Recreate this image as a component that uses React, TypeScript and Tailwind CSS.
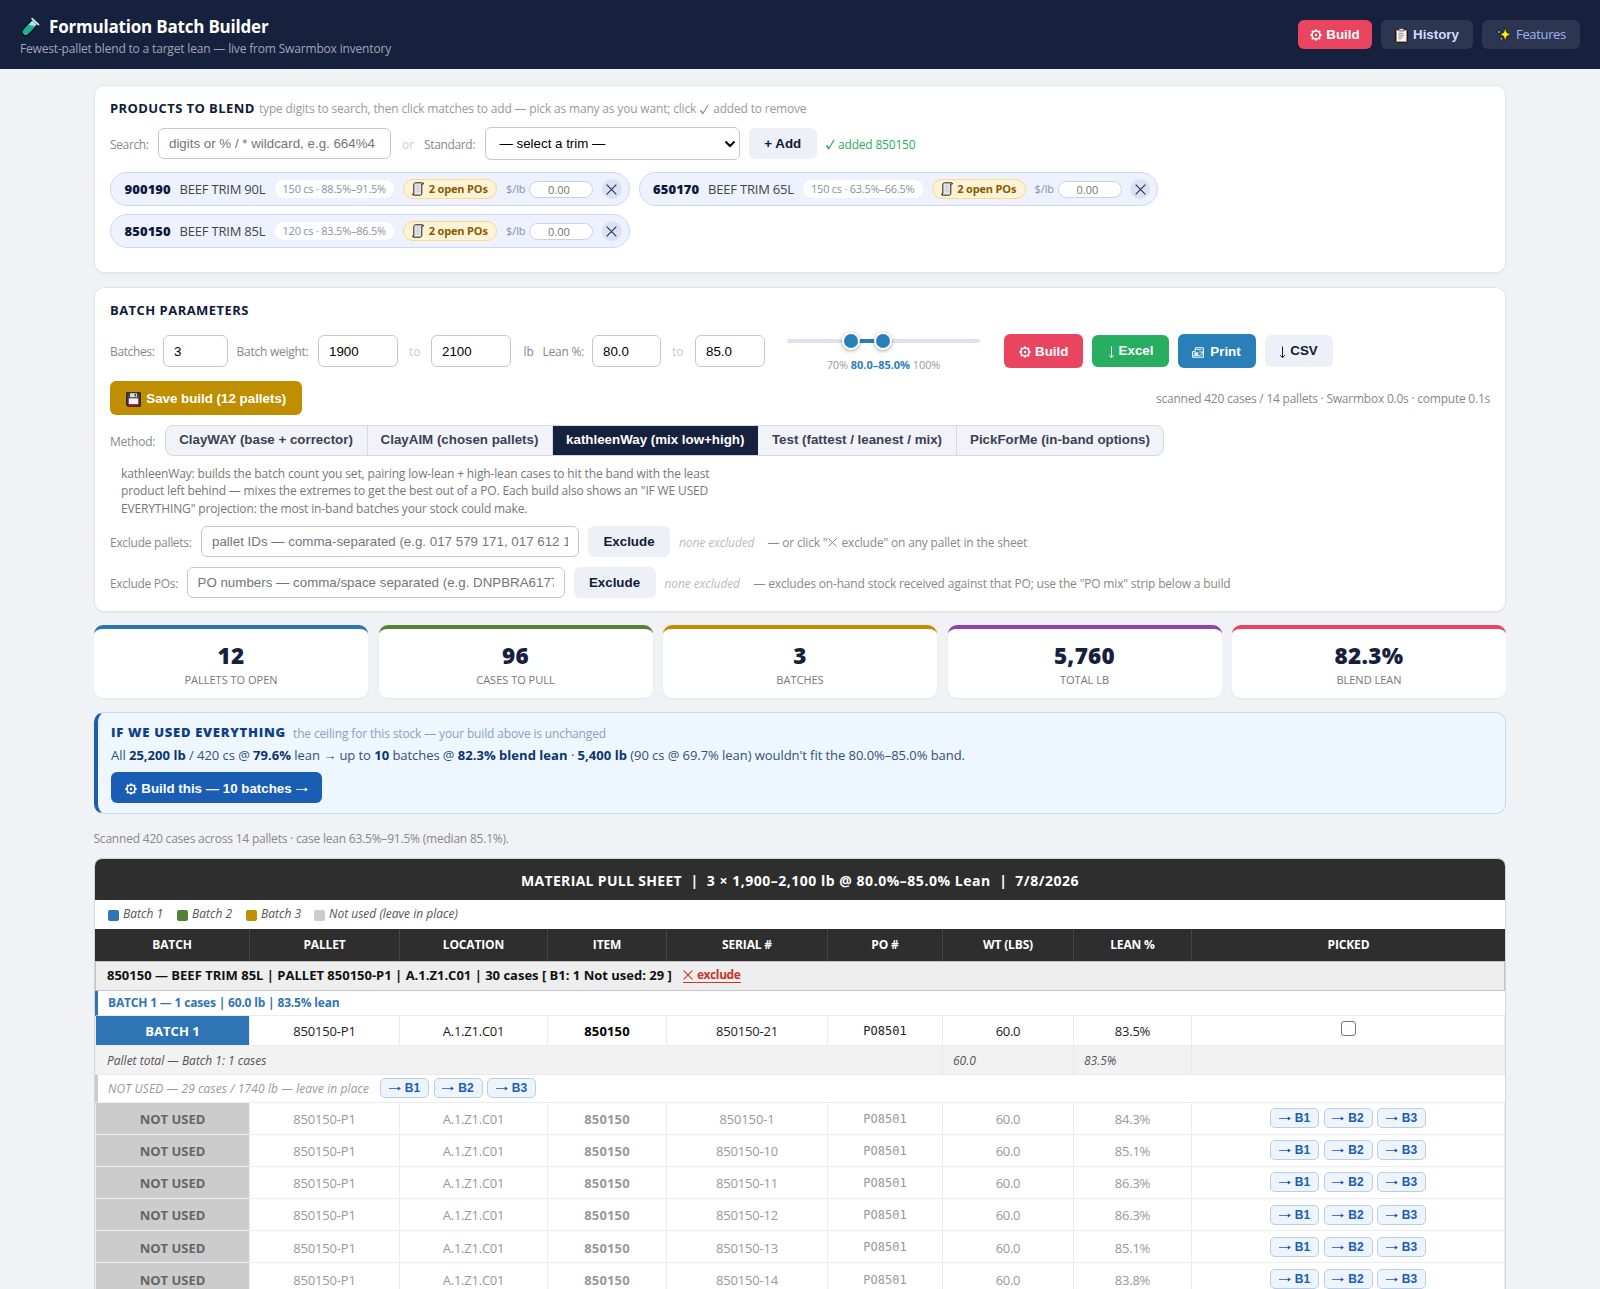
import React from 'react';
import clsx from 'clsx';

const PRODUCTS = [
  { code: '900190', name: 'BEEF TRIM 90L', stock: '150 cs · 88.5%–91.5%' },
  { code: '650170', name: 'BEEF TRIM 65L', stock: '150 cs · 63.5%–66.5%' },
  { code: '850150', name: 'BEEF TRIM 85L', stock: '120 cs · 83.5%–86.5%' },
];

const METHODS = [
  { label: 'ClayWAY (base + corrector)', width: 'w-[201px]' },
  { label: 'ClayAIM (chosen pallets)', width: 'w-[185px]' },
  { label: 'kathleenWay (mix low+high)', width: 'w-[206.5px]', active: true },
  { label: 'Test (fattest / leanest / mix)', width: 'w-[198px]' },
  { label: 'PickForMe (in-band options)', width: 'w-[207px]' },
];

const STATS = [
  { value: '12', label: 'PALLETS TO OPEN', color: 'border-t-[#2e75b6]' },
  { value: '96', label: 'CASES TO PULL', color: 'border-t-[#548235]' },
  { value: '3', label: 'BATCHES', color: 'border-t-[#bf8f00]' },
  { value: '5,760', label: 'TOTAL LB', color: 'border-t-[#8e44ad]' },
  { value: '82.3%', label: 'BLEND LEAN', color: 'border-t-[#e94560]' },
];

const COLUMNS = [
  { label: 'BATCH', width: 'w-[155px]' },
  { label: 'PALLET', width: 'w-[150px]' },
  { label: 'LOCATION', width: 'w-[148px]' },
  { label: 'ITEM', width: 'w-[119px]' },
  { label: 'SERIAL #', width: 'w-[161px]' },
  { label: 'PO #', width: 'w-[115px]' },
  { label: 'WT (LBS)', width: 'w-[131px]' },
  { label: 'LEAN %', width: 'w-[118px]' },
  { label: 'PICKED', width: 'w-[313px]' },
];

const UNUSED = [
  { serial: '850150-1', lean: '84.3%' },
  { serial: '850150-10', lean: '85.1%' },
  { serial: '850150-11', lean: '86.3%' },
  { serial: '850150-12', lean: '86.3%' },
  { serial: '850150-13', lean: '85.1%' },
  { serial: '850150-14', lean: '83.8%' },
];

type IconProps = { className?: string };

const GearIcon = ({ className }: IconProps) => (
  <svg className={className} width="12" height="12" viewBox="0 0 12 12" fill="none" stroke="currentColor">
    <circle cx="6" cy="6" r="4" strokeWidth="1.6" />
    <circle cx="6" cy="6" r="1.2" fill="currentColor" stroke="none" />
    <path
      d="M6 .4v1.600M6 10v1.600M.4 6h1.600M10 6h1.600M2 2l1 1M9 9l1 1M10 2L9 3M3 9l-1 1"
      strokeWidth="2"
    />
  </svg>
);

const DownArrow = ({ className }: IconProps) => (
  <svg className={className} width="7" height="13" viewBox="0 0 7 13" fill="none" stroke="currentColor">
    <path d="M3.5 .5v11M1.2 9.2l2.3 2.6 2.3-2.6" strokeWidth="1" />
  </svg>
);

const RightArrow = ({ className }: IconProps) => (
  <svg className={className} width="12" height="7" viewBox="0 0 12 7" fill="none">
    <path d="M0 3.5h10.500" stroke="currentColor" strokeWidth=".8" />
    <path d="M8.800 1.600L12 3.500 8.800 5.400z" fill="currentColor" />
  </svg>
);

const CrossIcon = ({ className }: IconProps) => (
  <svg className={className} viewBox="0 0 10 10" fill="none" stroke="currentColor">
    <path d="M.6 .6l8.8 8.8M9.4 .6L.6 9.4" strokeWidth="1.1" />
  </svg>
);

const CheckIcon = ({ className }: IconProps) => (
  <svg className={className} width="9" height="11" viewBox="0 0 9 11" fill="none" stroke="currentColor">
    <path d="M.6 6.6l2.2 3.2L8.2 .6" strokeWidth="1.1" />
    <path d="M.8 6.4l2 3.2" strokeWidth="1.6" />
  </svg>
);

const TubeIcon = () => (
  <svg width="21" height="20" viewBox="0 0 20 20">
    <path
      d="M11.800 2.200l5.600 5.200-9.400 10a3.700 3.700 0 0 1-5.300-5.200z"
      fill="#b9dcf3"
      stroke="#0c0f18"
      strokeWidth="1.600"
    />
    <path d="M7.600 7.600l7.200 1.800-7.300 7.500a3 3 0 0 1-4.300-4.200z" fill="#16b394" />
    <path d="M11.600 1.600l6.400 6" stroke="#cfe8f8" strokeWidth="1.800" strokeLinecap="round" />
  </svg>
);

const ClipboardIcon = () => (
  <svg width="13" height="15" viewBox="0 0 13 15">
    <rect x=".6" y="1.2" width="11.8" height="13.2" rx="1" fill="#c9916a" stroke="#111" strokeWidth="1" />
    <rect x="2" y="2.8" width="9" height="10.4" fill="#f3f3f3" />
    <rect x="4" y=".4" width="5" height="2.6" rx=".6" fill="#ddd" stroke="#222" strokeWidth=".6" />
    <path d="M3.4 5.4h5M3.4 7.2h6M3.4 9h4.4M3.4 10.8h3" stroke="#8d8d8d" strokeWidth=".9" />
  </svg>
);

const SparklesIcon = () => (
  <svg width="15" height="15" viewBox="0 0 15 15" stroke="#111" strokeWidth=".7">
    <path d="M9.2 .9l1.6 4.700 4 1.800-4 1.800-1.600 4.900-1.600-4.900L4 7.400l3.600-1.800z" fill="#fff100" />
    <path d="M3 2.2l.8 2 1.8.8-1.8.8-.8 2-.8-2L.4 5l1.8-.8z" fill="#50c8f4" />
    <path d="M5.4 9.4l.7 1.6 1.5.7-1.5.7-.7 1.6-.7-1.6-1.5-.7 1.5-.7z" fill="#f48fb1" />
  </svg>
);

const ReceiptIcon = () => (
  <svg width="12" height="14" viewBox="0 0 12 14">
    <path
      d="M3.4 .8h7.2c.6 0 .9.5.9 1.2H9.8v9c0 1.4-.6 2.2-1.7 2.2H1.4C.8 13.2.5 12.7.5 12h1.3V2.8c0-1.3.5-2 1.6-2z"
      fill="#e6e6ea"
      stroke="#222"
      strokeWidth="1"
    />
    <path d="M3.6 3.5h4.6M3.6 5.5h4.6M3.6 7.5h4.6M3.6 9.5h4.6M5.9 2.5v8.5" stroke="#c6c6cc" strokeWidth=".6" />
  </svg>
);

const FloppyIcon = () => (
  <svg width="15" height="15" viewBox="0 0 15 15">
    <path d="M.8 .8h13.4v13.4H2.3L.8 12.7z" fill="#4a4650" stroke="#1b1b1b" strokeWidth="1.2" />
    <rect x="4" y="1.2" width="7" height="4" fill="#d9d9de" />
    <rect x="8.6" y="1.8" width="1.5" height="2.6" fill="#4a4650" />
    <rect x="2.8" y="6.4" width="9.4" height="5.8" fill="#f4f4f6" />
    <rect x="2.8" y="12" width="9.4" height="1.7" fill="#d0104c" />
  </svg>
);

const PrinterIcon = () => (
  <svg width="12" height="11" viewBox="0 0 12 11" fill="none" stroke="currentColor">
    <path d="M.6 10.300V4.800L2.800 4M.6 10.300h10.700V1" strokeWidth="1.100" />
    <path d="M2.800 4.800L3.800 .7h7.500" strokeWidth="1.100" />
    <path d="M4.600 2.600h4.800" strokeWidth=".9" />
    <path d="M2.400 5.400h3.800v2.400H2.400z" fill="currentColor" stroke="none" />
    <path d="M7 5h4L8.400 8.600H1" strokeWidth=".9" />
  </svg>
);

const arial = "font-['Liberation_Sans',Arial,sans-serif]";

const Card = ({ children, className }: { children: React.ReactNode; className?: string }) => (
  <section
    className={clsx(
      'rounded-[10px] border border-[#e2e4e6] bg-white px-[15px] shadow-[0_1px_2px_rgba(0,0,0,0.04)]',
      className
    )}
  >
    {children}
  </section>
);

const Label = ({ children, className }: { children: React.ReactNode; className?: string }) => (
  <label className={clsx('shrink-0 whitespace-nowrap pt-0.5 text-xs text-[#888]', className)}>{children}</label>
);

const Field = ({ className, ...props }: React.InputHTMLAttributes<HTMLInputElement>) => (
  <input
    className={clsx(
      'h-8 shrink-0 rounded-md border border-[#c8c8c8] bg-white px-[10px] text-[13.333px] text-black placeholder:text-[#757575]',
      arial,
      className
    )}
    {...props}
  />
);

const Button = ({ children, className }: { children: React.ReactNode; className?: string }) => (
  <button
    className={clsx(
      'flex shrink-0 items-center justify-center whitespace-nowrap rounded-md text-[13.333px] font-bold',
      arial,
      className
    )}
  >
    {children}
  </button>
);

const ProductChip = ({ code, name, stock }: (typeof PRODUCTS)[number]) => (
  <div className="flex h-[34px] w-[519.5px] shrink-0 items-center rounded-full border border-[#cdd8f6] bg-[#eef2ff] pl-[13.5px] pr-[7px]">
    <span className="w-[55px] pt-px text-[13px] font-extrabold tracking-[0.1px] text-[#0f1a3a]">{code}</span>
    <span className="w-[95px] whitespace-nowrap pt-px text-[13px] tracking-[-0.2px] text-[#444]">{name}</span>
    <span className="flex h-[18px] w-[119.5px] items-center justify-center whitespace-nowrap rounded-full bg-white pt-px text-[11px] tracking-[-0.23px] text-[#8a90a8]">
      {stock}
    </span>
    <span className="ml-[9px] flex h-5 w-[94px] items-center justify-center gap-[4.500px] whitespace-nowrap rounded-full border border-[#fbd88a] bg-[#fff3d6] text-[11px] font-bold tracking-[-0.16px] text-[#8a5a00]">
      <ReceiptIcon />
      <span className="pt-px">2 open POs</span>
    </span>
    <span className="ml-[9px] w-[23px] pt-px text-[11px] tracking-[-0.09px] text-[#8a90a8]">$/lb</span>
    <input
      placeholder="0.00"
      className="h-[17px] w-[64px] rounded-full border border-[#c8d0ea] bg-white pl-[18px] text-[11px] placeholder:text-[#757575]"
    />
    <span className="ml-auto flex size-5 items-center justify-center rounded-full bg-[#dbe1f3] text-[#2b3563]">
      <CrossIcon className="size-[11px]" />
    </span>
  </div>
);

const MoveButtons = () => (
  <div className="flex gap-[4.500px]">
    {['B1', 'B2', 'B3'].map((b) => (
      <button
        key={b}
        className={clsx(
          'flex h-5 w-[49px] items-center justify-center gap-1 rounded-[5px] border border-[#b8cde8] bg-[#eef4fc] text-xs font-bold text-[#1a5db5]',
          arial
        )}
      >
        <RightArrow className="mt-px" />
        {b}
      </button>
    ))}
  </div>
);

const LeanSlider = () => (
  <div className="ml-[22.5px] mt-[9px] flex w-[193px] flex-col items-center">
    <div className="relative h-1 w-full rounded-full bg-[#dde2ee]">
      <div className="absolute left-[64px] h-1 w-[33px] bg-[#2980b9]" />
      <div className="absolute -top-[7px] left-[55px] size-[18px] rounded-full border-2 border-white bg-[#2980b9] shadow-[0_1px_4px_rgba(0,0,0,0.35)]" />
      <div className="absolute -top-[7px] left-[87px] size-[18px] rounded-full border-2 border-white bg-[#2980b9] shadow-[0_1px_4px_rgba(0,0,0,0.35)]" />
    </div>
    <div className="mt-[14px] h-4 whitespace-nowrap text-[11px] leading-4 tracking-[-0.1px] text-[#999]">
      70% <b className="tracking-[-0.02px] text-[#2980b9]">80.0–85.0%</b> 100%
    </div>
  </div>
);

const Header = () => (
  <header className="flex h-[69px] items-center justify-between bg-[#16213e] px-5">
    <div className="pt-[3px]">
      <h1 className="flex h-[23px] items-center gap-[8px] text-[17px] font-bold tracking-[-0.2px] text-white">
        <TubeIcon />
        Formulation Batch Builder
      </h1>
      <p className="h-[18px] pt-px text-xs leading-[18px] tracking-[-0.173px] text-[#a0a6b6]">
        Fewest-pallet blend to a target lean — live from Swarmbox inventory
      </p>
    </div>
    <nav className="flex gap-[9px]">
      <Button className="h-[29px] w-[74.5px] gap-[4.5px] bg-[#e94560] pt-px text-white">
        <GearIcon />
        Build
      </Button>
      <Button className="h-[29px] w-[92px] gap-[5px] bg-[#2d3650] pt-px text-[#cfdcff]">
        <ClipboardIcon />
        History
      </Button>
      <a className="flex h-[29px] w-[98px] items-center justify-center gap-[5px] rounded-md bg-[#2d3650] text-[13px] tracking-[-0.35px] text-[#9fb4f5]">
        <SparklesIcon />
        <span className="pt-px">Features</span>
      </a>
    </nav>
  </header>
);

const ProductsCard = () => (
  <Card className="h-[188px] pt-[13px]">
    <div className="flex h-[19px] items-center whitespace-nowrap">
      <h2 className="w-[149px] text-[13px] font-bold tracking-[0.41px] text-[#0f1a3a]">PRODUCTS TO BLEND</h2>
      <span className="flex items-center gap-1 pt-px text-xs tracking-[-0.175px] text-[#999]">
        type digits to search, then click matches to add — pick as many as you want; click
        <CheckIcon /> added to remove
      </span>
    </div>
    <div className="mt-[9px] flex h-[33px] items-center">
      <Label className="w-[48px] tracking-[-0.365px]">Search:</Label>
      <Field placeholder="digits or % / * wildcard, e.g. 664%4" className="h-[31px] w-[233px]" />
      <Label className="ml-[11px] w-[22px] text-[#ccc]">or</Label>
      <Label className="w-[60.5px] tracking-[-0.35px]">Standard:</Label>
      <div
        className={clsx(
          'flex h-[33px] w-[255.5px] items-center justify-between rounded-md border border-[#c8c8c8] bg-white pl-[14px] pr-[3px] text-[13.333px] text-black',
          arial
        )}
      >
        — select a trim —
        <svg width="12" height="8" viewBox="0 0 12 8" fill="none" stroke="currentColor">
          <path d="M1.5 1.5L6 6l4.500-4.500" strokeWidth="2" />
        </svg>
      </div>
      <Button className="ml-[9px] h-[31px] w-[67.5px] bg-[#edf0f6] text-[#0f1a3a]">+ Add</Button>
      <span className="ml-[9.5px] flex items-center gap-[3px] whitespace-nowrap pt-0.5 text-xs tracking-[-0.19px] text-[#27ae60]">
        <CheckIcon />
        added 850150
      </span>
    </div>
    <div className="mt-3 flex w-[1100px] flex-wrap gap-x-[9px] gap-y-2">
      {PRODUCTS.map((p) => (
        <ProductChip key={p.code} {...p} />
      ))}
    </div>
  </Card>
);

const ParametersCard = () => (
  <Card className="h-[325px] pt-[13px]">
    <h2 className="h-[18px] text-[13px] font-bold leading-[18px] tracking-[0.46px] text-[#0f1a3a]">BATCH PARAMETERS</h2>

    <div className="mt-[13px] flex h-[38px] items-center">
      <Label className="w-[53px] tracking-[-0.365px]">Batches:</Label>
      <Field defaultValue="3" className="w-[65px]" />
      <Label className="ml-[8.5px] w-[81.5px] tracking-[-0.254px]">Batch weight:</Label>
      <Field defaultValue="1900" className="w-[80px]" />
      <Label className="ml-[11px] w-[22px] text-[#ccc]">to</Label>
      <Field defaultValue="2100" className="w-[80px]" />
      <Label className="ml-[12.5px] w-[19px]">lb</Label>
      <Label className="w-[49.5px] tracking-[-0.246px]">Lean %:</Label>
      <Field defaultValue="80.0" className="w-[69px]" />
      <Label className="ml-[11px] w-[23px] text-[#ccc]">to</Label>
      <Field defaultValue="85.0" className="w-[69.5px]" />
      <LeanSlider />
      <Button className="ml-[24px] h-[34px] w-[79px] gap-[4.5px] bg-[#e94560] pt-0.5 text-white">
        <GearIcon />
        Build
      </Button>
      <Button className="ml-[9px] h-8 w-[77px] gap-1 bg-[#27ae60] text-white">
        <DownArrow className="mt-0.5" />
        Excel
      </Button>
      <Button className="ml-[8.5px] h-[34px] w-[78px] gap-[6px] bg-[#2980b9] pt-0.5 text-white">
        <PrinterIcon />
        Print
      </Button>
      <Button className="ml-[9px] h-8 w-[68px] gap-1 bg-[#edf0f6] text-[#0f1a3a]">
        <DownArrow className="mt-0.5" />
        CSV
      </Button>
    </div>

    <div className="mt-[11px] flex h-[34px] items-center justify-between">
      <Button className="h-[34px] w-[192px] gap-[5.500px] bg-[#bf8f00] pt-0.5 text-white">
        <FloppyIcon />
        Save build (12 pallets)
      </Button>
      <span className="pt-0.5 text-xs tracking-[-0.23px] text-[#888]">
        scanned 420 cases / 14 pallets · Swarmbox 0.0s · compute 0.1s
      </span>
    </div>

    <div className="mt-[9px] flex h-8 items-center">
      <Label className="w-[54.5px] pt-[3px] tracking-[-0.23px]">Method:</Label>
      <div className="flex h-[31px] overflow-hidden rounded-lg border border-[#d5d8e6] bg-[#f2f3f8]">
        {METHODS.map((m, i) => (
          <button
            key={m.label}
            className={clsx(
              'whitespace-nowrap text-[13.333px] font-bold',
              arial,
              m.width,
              i > 0 && !METHODS[i - 1].active && 'border-l border-[#d5d8e6]',
              m.active ? 'border-[#16213e] bg-[#16213e] text-white' : 'text-[#3a3f55]'
            )}
          >
            {m.label}
          </button>
        ))}
      </div>
    </div>

    <p className="ml-[11px] mt-[9px] h-[52px] text-xs leading-[17.4px] tracking-[-0.15px] text-[#777]">
      kathleenWay: builds the batch count you set, pairing low-lean + high-lean cases to hit the band with the least
      <br />
      product left behind — mixes the extremes to get the best out of a PO. Each build also shows an "IF WE USED
      <br />
      EVERYTHING" projection: the most in-band batches your stock could make.
    </p>

    <div className="mt-[8px] flex h-[32px] items-center">
      <Label className="w-[91px] pt-[3px] tracking-[-0.29px]">Exclude pallets:</Label>
      <Field
        placeholder="pallet IDs — comma-separated (e.g. 017 579 171, 017 612 123)"
        className="h-[31px] w-[378px]"
      />
      <Button className="ml-[9px] h-[31px] w-[82px] bg-[#edf0f6] pt-px text-[#0f1a3a]">Exclude</Button>
      <i className="ml-[9px] w-[88.5px] whitespace-nowrap pt-[3px] text-xs tracking-[-0.09px] text-[#bbb]">
        none excluded
      </i>
      <span className="flex items-center whitespace-nowrap pt-[3px] text-xs tracking-[-0.18px] text-[#888]">
        — or click "<CrossIcon className="mx-px size-[9px]" />
        <span className="ml-[3px]">exclude" on any pallet in the sheet</span>
      </span>
    </div>
    <div className="mt-[9px] flex h-[32px] items-center">
      <Label className="w-[76.5px] pt-[3px] tracking-[-0.31px]">Exclude POs:</Label>
      <Field
        placeholder="PO numbers — comma/space separated (e.g. DNPBRA61772)"
        className="h-[31px] w-[378px]"
      />
      <Button className="ml-[9px] h-[31px] w-[82px] bg-[#edf0f6] pt-px text-[#0f1a3a]">Exclude</Button>
      <i className="ml-[9px] w-[89px] whitespace-nowrap pt-[3px] text-xs tracking-[-0.09px] text-[#bbb]">
        none excluded
      </i>
      <span className="whitespace-nowrap pt-[3px] text-xs tracking-[-0.176px] text-[#888]">
        — excludes on-hand stock received against that PO; use the "PO mix" strip below a build
      </span>
    </div>
  </Card>
);

const Stats = () => (
  <div className="grid h-[73px] grid-cols-5 gap-[10.5px]">
    {STATS.map((s) => (
      <div
        key={s.label}
        className={clsx(
          'flex flex-col items-center rounded-[9px] border-t-4 bg-white pt-[11px] shadow-[0_1px_2px_rgba(0,0,0,0.05)]',
          s.color
        )}
      >
        <div className="h-8 text-[22.5px] font-extrabold leading-8 tracking-[0.3px] text-[#16213e]">{s.value}</div>
        <div className="h-4 text-[11px] leading-4 text-[#777]">{s.label}</div>
      </div>
    ))}
  </div>
);

const CeilingBanner = () => (
  <section className="h-[102px] rounded-[10px] border border-l-4 border-[#bfdaf7] border-l-[#1a5db5] bg-[#eef6ff] pl-[13px] pt-[10px]">
    <div className="flex h-[20px] items-center">
      <h2 className="w-[182px] whitespace-nowrap text-[13px] font-extrabold tracking-[0.72px] text-[#0d3f86]">
        IF WE USED EVERYTHING
      </h2>
      <span className="pt-px text-xs tracking-[-0.148px] text-[#8a9fc0]">
        the ceiling for this stock — your build above is unchanged
      </span>
    </div>
    <p className="mt-[2px] h-[20px] text-[13px] leading-5 tracking-[-0.06px] text-[#33507a] [&_b]:tracking-[0.04px] [&_b]:text-[#0b3470]">
      All <b>25,200 lb</b> / 420 cs @ <b>79.6%</b> lean → up to <b>10</b> batches @ <b>82.3% blend lean</b> ·{' '}
      <b>5,400 lb</b> (90 cs @ 69.7% lean) wouldn't fit the 80.0%–85.0% band.
    </p>
    <Button className="mt-[7px] h-[31px] w-[211px] gap-[4px] bg-[#1a5db5] pt-0.5 text-white">
      <GearIcon />
      Build this — 10 batches
      <RightArrow className="mt-px" />
    </Button>
  </section>
);

const LEGEND = [
  { label: 'Batch 1', color: 'bg-[#2e75b6]', width: 'w-[69px]' },
  { label: 'Batch 2', color: 'bg-[#548235]', width: 'w-[69px]' },
  { label: 'Batch 3', color: 'bg-[#bf8f00]', width: 'w-[68px]' },
  { label: 'Not used (leave in place)', color: 'bg-[#ccc]', width: 'w-[150px]' },
];

const cell = 'border-b border-r border-[#ececee] text-center align-middle p-0';
const textCell = clsx(cell, 'pt-[3px]');

const CaseRow = ({ serial, lean, used }: { serial: string; lean: string; used?: boolean }) => (
  <tr className={clsx(used ? 'h-[30px] text-[#222]' : 'h-[32.2px] text-[#999]')}>
    <td
      className={clsx(
        textCell,
        'border-l border-[#e4e4e6] text-[13px] font-bold',
        used ? 'bg-[#2e75b6] text-white' : 'bg-[#ccc] text-[#666]'
      )}
    >
      {used ? 'BATCH 1' : 'NOT USED'}
    </td>
    <td className={clsx(textCell, 'tracking-[-0.172px]')}>850150-P1</td>
    <td className={clsx(textCell, 'tracking-[-0.233px]')}>A.1.Z1.C01</td>
    <td className={clsx(textCell, 'font-bold tracking-[0.18px]', used && 'text-black')}>850150</td>
    <td className={clsx(textCell, 'tracking-[-0.17px]')}>{serial}</td>
    <td className={clsx(cell, "pt-px font-['DejaVu_Sans_Mono',monospace] text-xs")}>PO8501</td>
    <td className={clsx(textCell, 'tracking-[-0.3px]')}>60.0</td>
    <td className={clsx(textCell, 'tracking-[-0.234px]')}>{lean}</td>
    <td className={cell}>
      <div className="flex justify-center">
        {used ? <span className="mb-1 size-[15px] rounded-[3px] border border-[#767676] bg-white" /> : <MoveButtons />}
      </div>
    </td>
  </tr>
);

const PullSheet = () => (
  <section className="h-[431px] overflow-hidden rounded-t-[8px] border border-b-0 border-[#d4d5d8] bg-white">
    <h2 className="flex h-[41px] items-center justify-center gap-[8.5px] whitespace-pre bg-[#2e2e2e] pt-0.5 text-sm font-bold text-white">
      <span className="tracking-[0.32px]">MATERIAL PULL SHEET</span>
      <span>|</span>
      <span className="tracking-[0.52px]">3 × 1,900–2,100 lb @ 80.0%–85.0% Lean</span>
      <span>|</span>
      <span className="tracking-[0.5px]">7/8/2026</span>
    </h2>
    <div className="flex h-[28.5px] items-center pl-[13px] text-xs italic text-[#555]">
      {LEGEND.map((l) => (
        <span key={l.label} className={clsx('flex items-center gap-1 whitespace-nowrap', l.width)}>
          <span className={clsx('mt-0.5 size-[11px] rounded-[2px]', l.color)} />
          {l.label}
        </span>
      ))}
    </div>
    <table className="w-full table-fixed border-separate border-spacing-0 text-[13px]">
      <colgroup>
        {COLUMNS.map((c) => (
          <col key={c.label} className={c.width} />
        ))}
      </colgroup>
      <thead>
        <tr className="h-[32px] bg-[#2e2e2e] text-xs text-white">
          {COLUMNS.map((c) => (
            <th
              key={c.label}
              className="border-r border-[#444] p-0 pt-px font-bold tracking-[-0.15px] last:border-r-0"
            >
              {c.label}
            </th>
          ))}
        </tr>
      </thead>
      <tbody>
        <tr className="h-[30px] bg-[#eee]">
          <td
            colSpan={9}
            className="whitespace-pre border-x border-y border-[#c4c4c6] p-0 pl-[11px] pt-px text-[13px] font-bold text-[#111]"
          >
            850150 — BEEF TRIM 85L | PALLET 850150-P1 | A.1.Z1.C01 | 30 cases [ B1: 1 Not used: 29 ]
            <a className="ml-[11px] inline-flex items-center gap-1 border-b border-[#c0392b] text-xs leading-[14px] tracking-[-0.4px] text-[#c0392b]">
              <CrossIcon className="size-[10px]" />
              exclude
            </a>
          </td>
        </tr>
        <tr className="h-[25px]">
          <td
            colSpan={9}
            className="border-b border-l-[3px] border-b-[#ececee] border-l-[#2e75b6] p-0 pl-[10px] pt-px text-xs font-bold tracking-[-0.179px] text-[#2e75b6]"
          >
            BATCH 1 — 1 cases | 60.0 lb | 83.5% lean
          </td>
        </tr>
        <CaseRow used serial="850150-21" lean="83.5%" />
        <tr className="h-[29px] bg-[#f2f2f2] text-xs italic text-[#555]">
          <td colSpan={6} className="border-b border-r border-[#e8e8ea] p-0 pl-[12px] pt-[3px]">
            Pallet total — Batch 1: 1 cases
          </td>
          <td className="border-b border-r border-[#e8e8ea] p-0 pl-[10px] pt-[3px]">60.0</td>
          <td className="border-b border-r border-[#e8e8ea] p-0 pl-[10px] pt-[3px]">83.5%</td>
          <td className="border-b border-[#e8e8ea] p-0" />
        </tr>
        <tr className="h-[28px]">
          <td colSpan={9} className="border-b border-l-[3px] border-b-[#ececee] border-l-[#ccc] p-0 pl-[10px]">
            <div className="flex items-center">
              <i className="w-[272px] whitespace-nowrap pt-px text-xs tracking-[0.1px] text-[#999]">
                NOT USED — 29 cases / 1740 lb — leave in place
              </i>
              <MoveButtons />
            </div>
          </td>
        </tr>
        {UNUSED.map((u) => (
          <CaseRow key={u.serial} {...u} />
        ))}
      </tbody>
    </table>
  </section>
);

export default function App() {
  return (
    <div className="h-[1289px] overflow-hidden bg-[#f0f2f6] font-['Open_Sans','Noto_Sans',sans-serif]">
      <Header />
      <main className="mx-auto w-[1412px] pt-4">
        <ProductsCard />
        <div className="h-[14px]" />
        <ParametersCard />
        <div className="h-[13px]" />
        <Stats />
        <div className="h-[14px]" />
        <CeilingBanner />
        <p className="-ml-[0.5px] mb-[11px] mt-[15px] h-[18px] pt-px text-xs leading-[18px] tracking-[-0.21px] text-[#888]">
          Scanned 420 cases across 14 pallets · case lean 63.5%–91.5% (median 85.1%).
        </p>
        <PullSheet />
      </main>
    </div>
  );
}
